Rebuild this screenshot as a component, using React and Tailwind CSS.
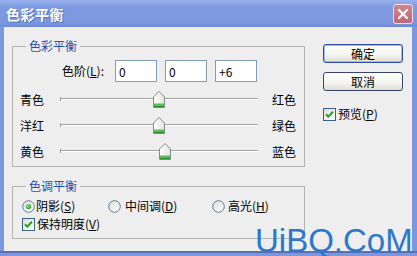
import React from "react";

const FONT = "font-['Noto_Sans_CJK_SC','Noto_Sans',sans-serif]";

function Thumb({ value }) {
  const center = ((value + 100) / 200) * 198;
  return (
    <svg
      className="absolute top-[4px]"
      style={{ left: Math.round(center - 6) }}
      width="12"
      height="17"
      viewBox="0 0 12 17"
    >
      <defs>
        <linearGradient id="tg" x1="0" y1="0" x2="1" y2="0">
          <stop offset="0" stopColor="#FFFFFF" />
          <stop offset="1" stopColor="#E4E4DC" />
        </linearGradient>
      </defs>
      <path d="M0.5 6 L6 0.5 L11.5 6 V16.5 H0.5 Z" fill="url(#tg)" stroke="#7E8C8A" />
      <rect x="1" y="12.5" width="10" height="2" fill="#5DBB5D" />
      <rect x="1" y="14.5" width="10" height="1.5" fill="#2A8F2A" />
    </svg>
  );
}

function SliderRow({ left, right, value }) {
  return (
    <div className="flex items-center h-[26px]">
      <span className="w-[40px] text-[12px] leading-[16px]">{left}</span>
      <div className="relative w-[198px] h-[26px]">
        <div className="absolute left-0 right-0 top-[11px] h-[2px] border-t border-[#A3A3A3] border-b border-b-white"></div>
        <div className="absolute left-0 top-[10px] w-[1px] h-[4px] bg-[#9A9A9A]"></div>
        <Thumb value={value} />
      </div>
      <span className="ml-[14px] text-[12px] leading-[16px]">{right}</span>
    </div>
  );
}

function Radio({ checked }) {
  return (
    <svg width="13" height="13" viewBox="0 0 13 13" className="shrink-0">
      <defs>
        <linearGradient id="rg" x1="0" y1="0" x2="1" y2="1">
          <stop offset="0" stopColor="#DCDCD7" />
          <stop offset="1" stopColor="#FFFFFF" />
        </linearGradient>
        <radialGradient id="rd" cx="0.4" cy="0.4" r="0.6">
          <stop offset="0" stopColor="#A8E0A8" />
          <stop offset="1" stopColor="#21A121" />
        </radialGradient>
      </defs>
      <circle cx="6.5" cy="6.5" r="5.8" fill="url(#rg)" stroke="#5E7A98" strokeWidth="1" />
      {checked && <circle cx="6.5" cy="6.5" r="2.6" fill="url(#rd)" />}
    </svg>
  );
}

function Check() {
  return (
    <svg width="13" height="13" viewBox="0 0 13 13" className="shrink-0">
      <defs>
        <linearGradient id="cg" x1="0" y1="0" x2="1" y2="1">
          <stop offset="0" stopColor="#DCDCD7" />
          <stop offset="1" stopColor="#FFFFFF" />
        </linearGradient>
      </defs>
      <rect x="0.5" y="0.5" width="12" height="12" fill="url(#cg)" stroke="#3A5F88" />
      <path d="M3 6.2 L5.3 8.6 L10 3.8" fill="none" stroke="#21A121" strokeWidth="2" />
    </svg>
  );
}

function Field({ value }) {
  return (
    <input
      readOnly
      value={value}
      className={`w-[42px] h-[22px] border border-[#7F9DB9] bg-white px-[3px] text-[12px] text-black outline-none ${FONT}`}
    />
  );
}

function Button({ children, primary }) {
  return (
    <button
      className={`w-[80px] h-[19px] rounded-[3px] border ${
        primary ? "border-[#2C4B9C] shadow-[inset_0_0_0_1px_#A8BDEB]" : "border-[#35456E]"
      } bg-[linear-gradient(180deg,#FFFFFF_0%,#F4F4F0_60%,#DEDCD4_100%)] text-[12px] leading-[16px] text-black flex items-center justify-center ${FONT}`}
    >
      {children}
    </button>
  );
}

export default function App() {
  return (
    <div className={`relative w-[417px] h-[256px] overflow-hidden bg-[#7C97DE] text-black ${FONT}`}>
      {/* title bar */}
      <div className="h-[27px] flex items-center justify-between pl-[6px] pr-[4px] bg-[linear-gradient(180deg,#9AB2EE_0%,#7E9BE2_25%,#7A97DF_85%,#6F8BD6_100%)]">
        <span className="text-white font-bold text-[14px] leading-[18px] tracking-[0.5px] [text-shadow:1px_1px_0_#5570C0]">
          色彩平衡
        </span>
        <div className="w-[20px] h-[20px] rounded-[3px] bg-[linear-gradient(180deg,#D08592,#BF6A78)] border border-[#F2DDE0] flex items-center justify-center">
          <svg width="12" height="12" viewBox="0 0 12 12">
            <path d="M2 2 L10 10 M10 2 L2 10" stroke="white" strokeWidth="2.2" strokeLinecap="round" />
          </svg>
        </div>
      </div>

      {/* body */}
      <div className="flex h-[224px] ml-[4px] mr-[5px] bg-[#EEEEEE]">
        <div className="pl-[8px] pt-[11px] w-[301px] flex flex-col">
          <fieldset className="w-[293px] h-[129px] border border-[#B4B4B4] p-0 m-0">
            <legend className="ml-[13px] px-[3px] text-[12px] leading-[16px] text-[#1E50B4]">色彩平衡</legend>
            <div className="pl-[7px]">
              <div className="flex items-center mt-[6px] h-[22px]">
                <span className="w-[84px] text-right text-[12px] leading-[16px]">
                  色阶(<span className="underline">L</span>):
                </span>
                <div className="ml-[11px] flex gap-[8px]">
                  <Field value="0" />
                  <Field value="0" />
                  <Field value="+6" />
                </div>
              </div>
              <div className="mt-[5px]">
                <SliderRow left="青色" right="红色" value={0} />
                <SliderRow left="洋红" right="绿色" value={0} />
                <SliderRow left="黄色" right="蓝色" value={6} />
              </div>
            </div>
          </fieldset>

          <fieldset className="mt-[11px] w-[293px] h-[61px] border border-[#B4B4B4] p-0 m-0">
            <legend className="ml-[13px] px-[3px] text-[12px] leading-[16px] text-[#1E50B4]">色调平衡</legend>
            <div className="pl-[9px] mt-[3px]">
              <div className="flex items-center h-[18px] text-[12px] leading-[16px]">
                <div className="w-[86px] flex items-center gap-[1px]">
                  <Radio checked />
                  <span>
                    阴影(<span className="underline">S</span>)
                  </span>
                </div>
                <div className="w-[104px] flex items-center gap-[4px]">
                  <Radio />
                  <span>
                    中间调(<span className="underline">D</span>)
                  </span>
                </div>
                <div className="flex items-center gap-[3px]">
                  <Radio />
                  <span>
                    高光(<span className="underline">H</span>)
                  </span>
                </div>
              </div>
              <div className="flex items-center h-[18px] gap-[2px] text-[12px] leading-[16px]">
                <Check />
                <span>
                  保持明度(<span className="underline">V</span>)
                </span>
              </div>
            </div>
          </fieldset>
        </div>

        <div className="ml-[18px] pt-[17px] w-[80px] flex flex-col">
          <Button primary>确定</Button>
          <div className="mt-[9px]">
            <Button>取消</Button>
          </div>
          <div className="mt-[15px] flex items-center gap-[2px] text-[12px] leading-[16px]">
            <Check />
            <span>
              预览(<span className="underline">P</span>)
            </span>
          </div>
        </div>
      </div>

      {/* bottom border line */}
      <div className="h-[2px] bg-[#5A6FB8]"></div>

      {/* watermark */}
      <div className="absolute left-[255px] top-[224px] text-[33px] leading-none text-[#2B78CD] font-['Liberation_Sans',sans-serif]">
        UiBQ.CoM
      </div>
    </div>
  );
}
